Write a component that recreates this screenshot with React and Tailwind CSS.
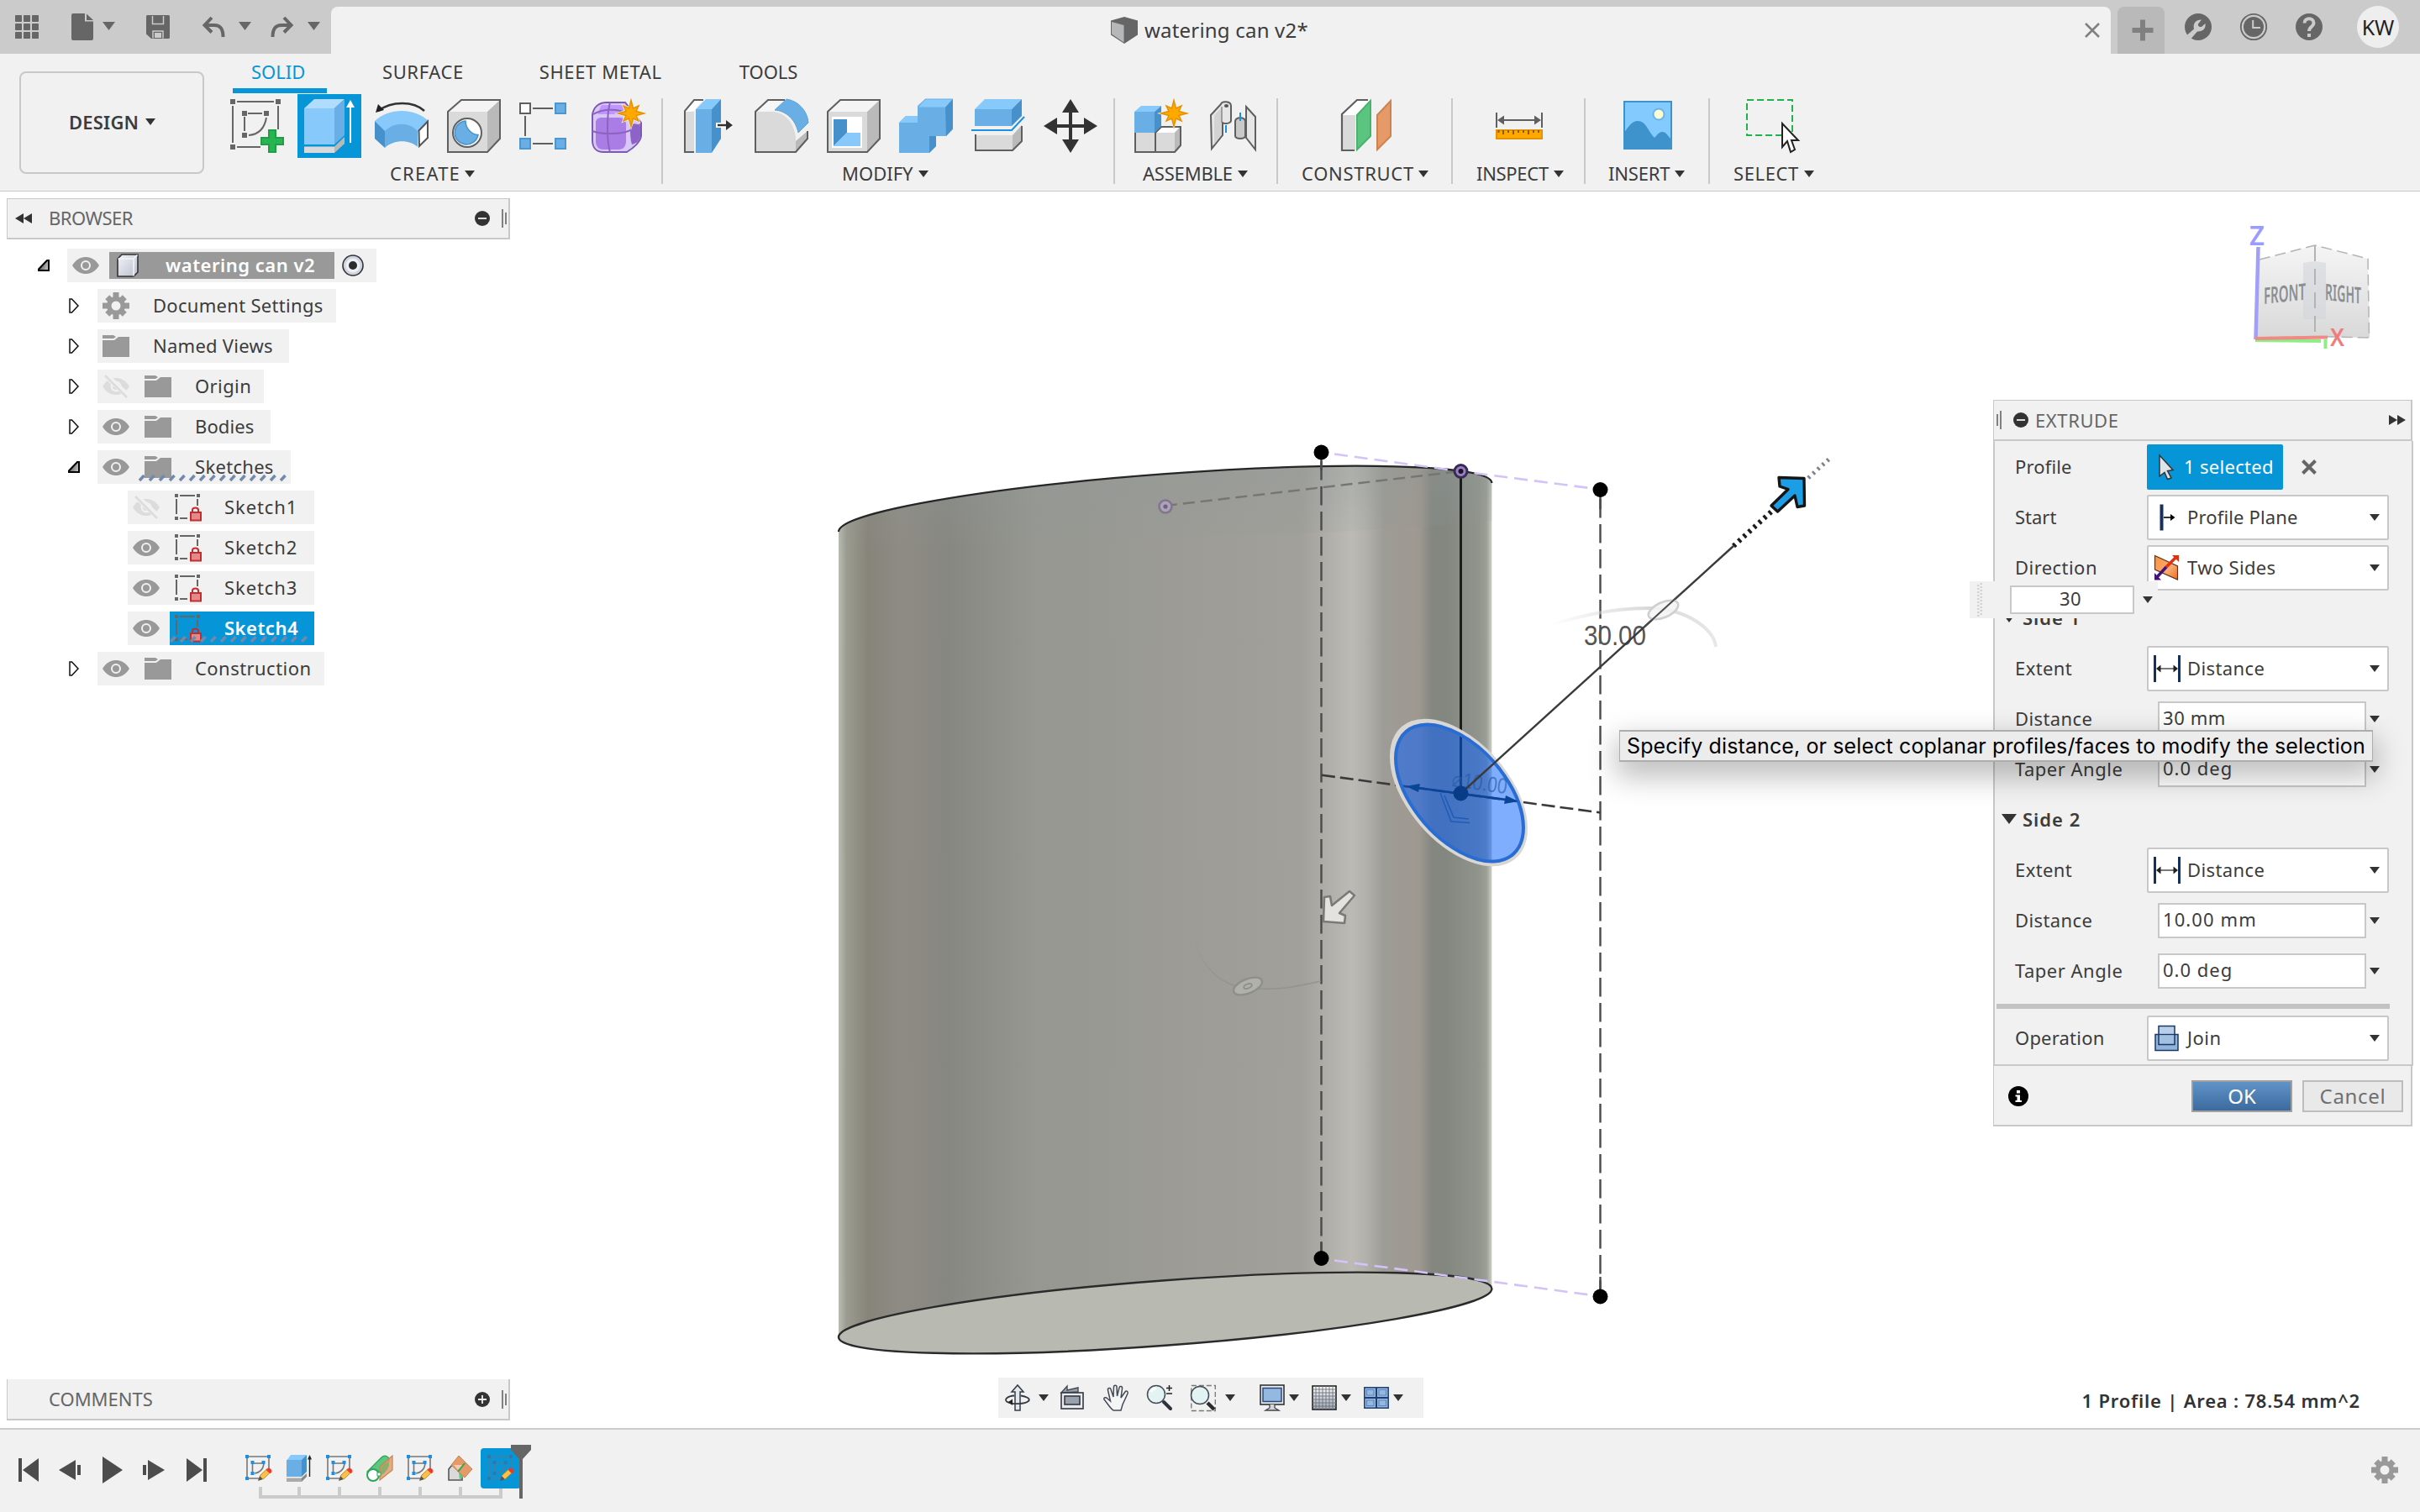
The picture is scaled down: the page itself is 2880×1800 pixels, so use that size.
import React from "react";

/* ---------- small shared glyphs ---------- */

function Caret({ className = "w-3 h-2", fill = "#333" }) {
  return (
    <svg className={"shrink-0 " + className} viewBox="0 0 12 8" preserveAspectRatio="none">
      <path d="M0 0H12L6 8Z" fill={fill} />
    </svg>
  );
}

function Svg({ w = 64, h = 64, className = "size-16", children }) {
  return (
    <svg className={"shrink-0 overflow-visible " + className} viewBox={`0 0 ${w} ${h}`} fill="none">
      {children}
    </svg>
  );
}

function starPoints(cx, cy, outer, inner, n) {
  const pts = [];
  for (let i = 0; i < n * 2; i++) {
    const r = i % 2 ? inner : i % 4 ? outer * 0.82 : outer;
    const a = (Math.PI * i) / n - Math.PI / 2;
    pts.push(`${(cx + r * Math.cos(a)).toFixed(2)},${(cy + r * Math.sin(a)).toFixed(2)}`);
  }
  return pts.join(" ");
}

function Star({ cx, cy }) {
  return (
    <>
      <polygon points={starPoints(cx, cy, 20, 9, 8)} fill="#f1f1f1" />
      <polygon points={starPoints(cx, cy, 15.5, 6.5, 8)} fill="#ffa800" stroke="#e59200" strokeWidth="1.5" />
    </>
  );
}

/* ---------- title bar ---------- */

function TitleBar() {
  return (
    <div className="flex h-16 bg-[#cbcbcb]">
      <div className="flex w-[394px] items-center pl-[18px]">
        <Svg w={28} h={28} className="size-7">
          {[0, 10, 20].map((y) => [0, 10, 20].map((x) => <rect key={x + "-" + y} x={x} y={y} width="8" height="8" rx="0.8" fill="#666" />))}
        </Svg>
        <Svg w={26} h={32} className="ml-[39px] h-8 w-[26px]">
          <path d="M2 0H16V9.500H26V30a2 2 0 0 1-2 2H2a2 2 0 0 1-2-2V2a2 2 0 0 1 2-2Z" fill="#666" />
          <path d="M18 0.500L26 8H18Z" fill="#666" />
        </Svg>
        <Caret className="ml-[11px] mb-0.5 h-2.5 w-[15px]" fill="#666" />
        <Svg w={28} h={28} className="ml-[37px] size-7">
          <path d="M1.500 0H26.500A1.500 1.500 0 0 1 28 1.500V26.500A1.500 1.500 0 0 1 26.500 28H6L0 22.500V1.500A1.500 1.500 0 0 1 1.500 0Z" fill="#666" />
          <path d="M7.500 1V10.500H20.500V1M8 27.500V19H20V27.500" stroke="#cbcbcb" strokeWidth="1.500" />
          <path d="M10 21H18V27H10Z" fill="#cbcbcb" />
        </Svg>
        <Svg w={26} h={24} className="ml-[39px] h-6 w-[26px]">
          <path d="M11 1L2.500 10L11 18.500M3 10H14C21 10 24.500 14 24.500 24" stroke="#666" strokeWidth="4" />
        </Svg>
        <Caret className="ml-[17px] mb-0.5 h-2.5 w-[15px]" fill="#666" />
        <Svg w={26} h={24} className="ml-6 h-6 w-[26px]">
          <path d="M15 1L23.500 10L15 18.500M23 10H12C5 10 1.500 14 1.500 24" stroke="#666" strokeWidth="4" />
        </Svg>
        <Caret className="ml-[17px] mb-0.5 h-2.5 w-[15px]" fill="#666" />
      </div>
      <div className="mt-2 flex w-[2118px] items-center rounded-t-lg bg-[#f1f1f1] pl-[928px]">
        <Svg w={32} h={32} className="size-8">
          <path d="M0 4.500L16 0L32 4.500V21.500L16 32L0 21.500Z" fill="#666" />
          <path d="M1 6L15.500 10V30.500L1 20.500Z" fill="#b5b7b8" />
        </Svg>
        <span className="ml-2 text-[24px] tracking-[0.2px] text-[#3c3c3c]">watering can v2*</span>
        <Svg w={18} h={18} className="ml-[924px] size-[18px]">
          <path d="M1 1L17 17M17 1L1 17" stroke="#808080" strokeWidth="2.500" />
        </Svg>
      </div>
      <div className="mt-2 ml-2 flex w-14 items-center justify-center rounded-t-lg bg-[#b9b9b9]">
        <Svg w={26} h={26} className="ml-1 size-[26px]">
          <path d="M13 0.500V25.500M0.500 13H25.500" stroke="#808080" strokeWidth="6" />
        </Svg>
      </div>
      <div className="flex flex-1 items-center pl-6">
        <Svg w={32} h={32} className="size-8">
          <circle cx="16" cy="16" r="16" fill="#666" />
          <path d="M2.500 26L11 18.500C9.500 12 13 7.500 20 7.500L16 12.500C15.500 15 17 16.500 20 16L24.500 12C25.500 18 21 22 15 21.500L7.500 30Z" fill="#cbcbcb" />
        </Svg>
        <Svg w={32} h={32} className="ml-[34px] size-8">
          <circle cx="16" cy="16" r="15.200" stroke="#666" strokeWidth="1.800" />
          <circle cx="16" cy="16" r="12" fill="#666" />
          <path d="M15.200 8V17H24" stroke="#cbcbcb" strokeWidth="2" />
        </Svg>
        <Svg w={32} h={32} className="ml-[34px] size-8">
          <circle cx="16" cy="16" r="16" fill="#666" />
          <path d="M10.500 11.500C10.500 4.500 21.500 4.500 21.500 11.500C21.500 16 16 15.500 16 21" stroke="#cbcbcb" strokeWidth="4" />
          <rect x="14" y="24" width="4" height="4" fill="#cbcbcb" />
        </Svg>
        <div className="ml-[41px] flex size-[50px] items-center justify-center rounded-full bg-[#eee] text-[25px] text-[#222]">
          <span className="leading-none">KW</span>
        </div>
      </div>
    </div>
  );
}

/* ---------- ribbon icons ---------- */

function IconSketch() {
  return (
    <Svg>
      <path d="M8 3H52M3 8V52M57 8V36M8 57H36M21 17H38M17 21V38" stroke="#666" strokeWidth="2" />
      <path d="M43 22C41 34 34 42 22 43" stroke="#666" strokeWidth="2" />
      {[[0, 0], [54, 0], [0, 54], [14, 14], [40, 14], [14, 40]].map(([x, y]) => (
        <rect key={x + "-" + y} x={x} y={y} width="6" height="6" fill="#666" />
      ))}
      <path d="M46 37H54V46H63V54H54V63H46V54H37V46H46Z" fill="#26b550" stroke="#1f9d49" strokeWidth="2" />
    </Svg>
  );
}

function IconExtrude() {
  return (
    <div className="-m-1.5 size-[76px] shrink-0 bg-[#0696d7]">
      <Svg w={76} h={76} className="size-[76px]">
        <path d="M8 17L20 6H56L44 17Z" fill="#b2dcfe" />
        <path d="M8 17H44V60H8Z" fill="#87c9fb" />
        <path d="M44 17L56 6V49L44 60Z" fill="#69afe5" />
        <path d="M8 62.500H44V70H8Z" fill="#dadada" />
        <path d="M44 62.500L56 51V59L44 70Z" fill="#b9b9b9" />
        <path d="M63 58V14" stroke="#fff" strokeWidth="2" />
        <path d="M58 16L63 7L68 16Z" fill="#fff" />
      </Svg>
    </div>
  );
}

function IconRevolve() {
  return (
    <Svg>
      <path d="M0 26C17 10 47 10 64 26L52 39C42 29 22 29 12 39Z" fill="#87c9fb" />
      <path d="M0 26L12 38V58L0 47Z" fill="#4691cb" />
      <path d="M12 38C23 27 41 27 51 38V57C41 48 23 48 12 58Z" fill="#69afe5" />
      <path d="M52.500 37.500L63 26.500V46L53 56Z" fill="#fff" stroke="#555" strokeWidth="2" />
      <path d="M59 14C46 2 20 2 4 14" stroke="#333" strokeWidth="2.500" />
      <path d="M1 16L4 6L11 13Z" fill="#222" />
    </Svg>
  );
}

function IconHole() {
  return (
    <Svg>
      <path d="M1 15H48V63H1Z" fill="#dadada" />
      <path d="M1 15L17 1H63L48 15Z" fill="#f4f4f4" />
      <path d="M48 15L63 1V47L48 63Z" fill="#bababa" />
      <path d="M1 63V15L17 1H63V47L48 63Z" stroke="#5f5f5f" strokeWidth="2" />
      <circle cx="24" cy="40" r="17" fill="#fff" stroke="#5f5f5f" strokeWidth="2" />
      <path d="M22 26C22 35 29 42 37 42.500A14 14 0 1 1 22 26Z" fill="#69afe5" stroke="#4691cb" strokeWidth="1.500" />
    </Svg>
  );
}

function IconPattern() {
  return (
    <Svg>
      <path d="M16 11H40M7 20V44M16 53H40" stroke="#5f5f5f" strokeWidth="2" />
      <rect x="1" y="5" width="12" height="12" fill="#fff" stroke="#5f5f5f" strokeWidth="2" />
      <rect x="43" y="5" width="12" height="12" fill="#69afe5" stroke="#4c97cf" strokeWidth="2" />
      <rect x="1" y="47" width="12" height="12" fill="#69afe5" stroke="#4c97cf" strokeWidth="2" />
      <rect x="43" y="47" width="12" height="12" fill="#69afe5" stroke="#4c97cf" strokeWidth="2" />
    </Svg>
  );
}

function IconForm() {
  return (
    <Svg>
      <path d="M1 19C2 10 8 4 18 4H40L59 28V44C58 52 50 58 42 63H14C6 63 1 58 1 49Z" fill="#d9c7f7" stroke="#7b5bb0" strokeWidth="2" />
      <path d="M5 28C5 24 8 22 12 22H33C38 22 41 25 41 30V50C41 56 38 60 32 60H14C8 60 5 56 5 50Z" fill="#a97de5" />
      <path d="M12 7H36L42 18H8C8 14 10 10 12 7Z" fill="#bf95ff" />
      <path d="M46 34C48 28 53 28 58 32V44C57 50 53 53 48 54C46 48 46 40 46 34Z" fill="#8e63c9" />
      <path d="M22 4C18 18 18 50 22 63M1 38C10 42 34 42 44 38L58 30M2 18C14 11 32 11 44 18" stroke="#8a64bd" strokeWidth="2" />
      <Star cx={47} cy={17} />
    </Svg>
  );
}

function IconPressPull() {
  return (
    <Svg>
      <path d="M3 15H14V63H3Z" fill="#dadada" />
      <path d="M3 15L14 1H24L14 14Z" fill="#fff" />
      <path d="M14 63H3V14L14 1H25" stroke="#5f5f5f" strokeWidth="2" />
      <path d="M16 12H35V64H16Z" fill="#69afe5" />
      <path d="M16 12L28 0H46L35 12Z" fill="#87c9fb" />
      <path d="M35 12L46 0V47L35 64Z" fill="#4691cb" />
      <path d="M40 31H60" stroke="#fff" strokeWidth="6" />
      <path d="M42 31H56" stroke="#333" strokeWidth="2.500" />
      <path d="M52 25L60 31L52 37Z" fill="#333" />
    </Svg>
  );
}

function IconFillet() {
  return (
    <Svg>
      <path d="M1 15L16 1H36L24 14Z" fill="#f6f6f6" />
      <path d="M1 15H22C36 16 47 28 49 46V63H1Z" fill="#dadada" />
      <path d="M49 50L63 38V46L49 63Z" fill="#bababa" />
      <path d="M36 1H16L1 15V63H49L63 47V38" stroke="#5f5f5f" strokeWidth="2" />
      <path d="M24 13L38 0C52 2 63 14 64 28L52 40C49 25 38 14 24 13Z" fill="#69afe5" stroke="#5aa3d9" strokeWidth="1" />
    </Svg>
  );
}

function IconShell() {
  return (
    <Svg>
      <path d="M1 15H48V63H1Z" fill="#dadada" />
      <path d="M1 15L16 1H63L48 15Z" fill="#f4f4f4" />
      <path d="M48 15L63 1V47L48 63Z" fill="#bababa" />
      <path d="M1 63V15L16 1H63V47L48 63Z" stroke="#5f5f5f" strokeWidth="2" />
      <rect x="6" y="21" width="36" height="37" fill="#fff" />
      <path d="M8 24H24V40L8 56Z" fill="#4691cb" />
      <path d="M24 40H40V56H8Z" fill="#87c9fb" />
    </Svg>
  );
}

function IconCombine() {
  return (
    <Svg>
      <path d="M0 28L8 20H22V8L31 0H64V36L56 44H44V56L36 64H0Z" fill="#69afe5" />
      <path d="M22 10L31 0H64L55 10Z" fill="#87c9fb" stroke="#69afe5" />
      <path d="M0 28L8 20H22V28Z" fill="#87c9fb" />
      <path d="M55 10L64 0V35L56 44ZM36 44H44V56L36 64Z" fill="#4691cb" />
    </Svg>
  );
}

function IconSplit() {
  return (
    <Svg>
      <path d="M4 12H48V32H4Z" fill="#69afe5" />
      <path d="M4 12L16 0H60L48 12Z" fill="#87c9fb" />
      <path d="M48 12L60 0V20L48 32Z" fill="#4691cb" />
      <path d="M5 43H49V61H5Z" fill="#dadada" />
      <path d="M49 43L60 31V50L49 61Z" fill="#bababa" />
      <path d="M5 42V61H49L60 50V32" stroke="#5f5f5f" strokeWidth="2" />
      <path d="M0 37H48L63 21" stroke="#1a8fe3" strokeWidth="2" />
    </Svg>
  );
}

function IconMove() {
  return (
    <Svg>
      <path d="M32 8V56M8 32H56" stroke="#333" strokeWidth="4" />
      <path d="M32 0L42 16H22ZM32 64L42 48H22ZM0 32L16 22V42ZM64 32L48 22V42Z" fill="#333" />
    </Svg>
  );
}

function IconNewComponent() {
  return (
    <Svg>
      <path d="M25 40L32 32H55L48 40Z" fill="#fff" />
      <path d="M0.500 40H24.500V63H0.500ZM25 40H48V63H25Z" fill="#dadada" />
      <path d="M48 40L55 32V56L48 63Z" fill="#bababa" />
      <path d="M1 40V63H48L55 55V33H32L25 40V63" stroke="#5f5f5f" strokeWidth="2" />
      <path d="M0 15H24V40H0Z" fill="#69afe5" />
      <path d="M0 15L8 8H32L24 15Z" fill="#87c9fb" />
      <path d="M24 15L32 8V32L24 40Z" fill="#4691cb" />
      <Star cx={47} cy={17} />
    </Svg>
  );
}

function IconJoint() {
  return (
    <Svg>
      <path d="M5 19L17 6C18 2 29 2 29 8V26C28 29 22 30 19 28V43L6 59Z" fill="#e6e6e6" stroke="#5f5f5f" strokeWidth="2" />
      <path d="M9 19L18 10V42L9 54Z" fill="#d3d3d3" />
      <path d="M18 9V28" stroke="#8a8a8a" strokeWidth="1.500" />
      <ellipse cx="23.500" cy="8" rx="2.600" ry="2" fill="#555" />
      <path d="M23 31V40" stroke="#1a8fe3" strokeWidth="2" />
      <path d="M47 9L58 21V60L47 46Z" fill="#e6e6e6" stroke="#5f5f5f" strokeWidth="2" />
      <path d="M34 26C35 21 45 21 46 26V44C45 48 35 48 34 44Z" fill="#c9c9c9" stroke="#5f5f5f" strokeWidth="2" />
      <path d="M40 16V26" stroke="#1a8fe3" strokeWidth="2" />
    </Svg>
  );
}

function IconPlanes() {
  return (
    <Svg>
      <path d="M3 19L20 2H36L20 19Z" fill="#fff" />
      <path d="M3 19H19V61H3Z" fill="#dadada" />
      <path d="M18 61H3V18L21 1H34" stroke="#5f5f5f" strokeWidth="2.200" />
      <path d="M21 19L37 2V44L21 60Z" fill="#5bc57f" stroke="#49b26e" strokeWidth="2" />
      <path d="M45 19L61 2V44L45 60Z" fill="#e59a68" stroke="#cc834f" strokeWidth="2" />
    </Svg>
  );
}

function IconMeasure() {
  return (
    <Svg>
      <path d="M5 16V34M59 16V34M8 25H56" stroke="#5f5f5f" strokeWidth="2" />
      <path d="M6 25L14 19.500V30.500ZM58 25L50 19.500V30.500Z" fill="#5f5f5f" />
      <rect x="5" y="37" width="54" height="10" fill="#ffa800" stroke="#e59200" strokeWidth="2" />
      <path d="M7.500 37V40M13 37V42M19 37V40M25 37V42M31 37V40M37 37V40M43 37V42M49 37V40M55 37V40" stroke="#8a5b00" strokeWidth="2" />
    </Svg>
  );
}

function IconInsert() {
  return (
    <Svg>
      <rect x="4" y="3" width="56" height="56" fill="#82caff" stroke="#3e93cd" strokeWidth="2" />
      <circle cx="45" cy="18" r="6.500" fill="#feffd3" stroke="#6cb3e4" strokeWidth="2" />
      <path d="M4 40C8 34 13 26 20 26C30 26 32 38 40 46C43 43 45 39 49 39C54 39 56 44 60 48V59H4Z" fill="#3e93cd" />
    </Svg>
  );
}

function IconSelect() {
  return (
    <Svg>
      <rect x="1" y="1" width="54" height="42" stroke="#20b24b" strokeWidth="2" strokeDasharray="8 4" />
      <path d="M43 29V57L49 50L53 63L58 60L54 49H62Z" fill="#fff" stroke="#222" strokeWidth="2" />
    </Svg>
  );
}

/* ---------- ribbon ---------- */

const GROUPS = [
  { label: "CREATE", track: "tracking-[1.2px]", box: "w-[513px]", pad: "", text: "pl-[190px]", gap: "ml-[5px]", icons: [IconSketch, IconExtrude, IconRevolve, IconHole, IconPattern, IconForm] },
  { label: "MODIFY", track: "tracking-normal", box: "w-[536px]", pad: "pl-[23px]", text: "pl-[213px]", gap: "ml-1.5", icons: [IconPressPull, IconFillet, IconShell, IconCombine, IconSplit, IconMove] },
  { label: "ASSEMBLE", track: "tracking-[-0.2px]", box: "w-[192px]", pad: "pl-[23px]", text: "pl-[33px]", gap: "ml-1.5", icons: [IconNewComponent, IconJoint] },
  { label: "CONSTRUCT", track: "tracking-[0.7px]", box: "w-[206px]", pad: "pl-[73px]", text: "pl-[28px]", gap: "ml-[5px]", icons: [IconPlanes] },
  { label: "INSPECT", track: "tracking-[-0.3px]", box: "w-[156px]", pad: "pl-[47px]", text: "pl-[28px]", gap: "ml-1.5", icons: [IconMeasure] },
  { label: "INSERT", track: "tracking-[-0.2px]", box: "w-[146px]", pad: "pl-[42px]", text: "pl-[27px]", gap: "ml-1.5", icons: [IconInsert] },
  { label: "SELECT", track: "tracking-[0.6px]", box: "w-[146px]", pad: "pl-[43px]", text: "pl-[28px]", gap: "ml-1.5", icons: [IconSelect] },
];

function Ribbon() {
  return (
    <div className="flex h-[164px] border-b border-[#c8c8c8] bg-[#f1f1f1] text-[22px] text-[#3c3c3c]">
      <div className="w-[274px] pt-[21px] pl-[23px]">
        <div className="flex h-[122px] w-[220px] items-center rounded-lg border-2 border-[#c8c8c8] pb-0.5 pl-[57px]">
          <span className="font-semibold tracking-[0.2px]">DESIGN</span>
          <Caret className="ml-2 h-2 w-3" />
        </div>
      </div>
      <div className="flex flex-1 flex-col">
        <div className="flex h-[47px] leading-[40px]">
          <div className="ml-[3px] w-[112px] border-b-[6px] border-[#0696d7] pt-px pl-[22px] text-[#0696d7]">SOLID</div>
          <div className="ml-[66px] pt-px tracking-[0.6px]">SURFACE</div>
          <div className="ml-[90px] pt-px tracking-[0.6px]">SHEET METAL</div>
          <div className="ml-[92px] pt-px">TOOLS</div>
        </div>
        <div className="flex">
          {GROUPS.map((g, i) => (
            <React.Fragment key={g.label}>
              {i > 0 && <div className="mt-1.5 h-[102px] w-0.5 bg-[#c8c8c8]" />}
              <div className={"pt-[7px] " + g.box}>
                <div className={"flex h-16 gap-[22px] " + g.pad}>
                  {g.icons.map((I, k) => <I key={k} />)}
                </div>
                <div className={"mt-2.5 flex items-center leading-[29px] " + g.text}>
                  <span className={g.track}>{g.label}</span>
                  <Caret className={"h-2 w-3 " + g.gap} />
                </div>
              </div>
            </React.Fragment>
          ))}
        </div>
      </div>
    </div>
  );
}

/* ---------- browser tree ---------- */

function Eye({ off }) {
  return off ? (
    <Svg w={32} h={26} className="h-[26px] w-8">
      <path d="M0 13C5 5 11 3 16 3S27 5 32 13C27 21 21 23 16 23S5 21 0 13Z" fill="#dcdcdc" />
      <circle cx="16" cy="13" r="6.500" fill="#f1f1f1" />
      <circle cx="16" cy="13" r="4" fill="#dcdcdc" />
      <path d="M3 -1L31 25" stroke="#f1f1f1" strokeWidth="7" />
      <path d="M3 0L29 26" stroke="#dcdcdc" strokeWidth="2.500" />
    </Svg>
  ) : (
    <Svg w={32} h={20} className="h-5 w-8">
      <path d="M0 10C5 2 11 0 16 0S27 2 32 10C27 18 21 20 16 20S5 18 0 10Z" fill="#999" />
      <circle cx="16" cy="10" r="5" stroke="#f1f1f1" strokeWidth="2" />
    </Svg>
  );
}

function Folder() {
  return (
    <Svg w={32} h={26} className="h-[26px] w-8">
      <path d="M0 0H13L16 2L13 4H0Z" fill="#999" />
      <path d="M0 6H14L19 2H32V26H0Z" fill="#999" />
    </Svg>
  );
}

function Gear() {
  return (
    <Svg w={32} h={32} className="size-8">
      <g fill="#999">
        {[0, 45, 90, 135].map((a) => (
          <rect key={a} x="12.500" y={a % 90 ? 1.5 : 0} width="7" height={a % 90 ? 29 : 32} transform={`rotate(${a} 16 16)`} />
        ))}
        <circle cx="16" cy="16" r="11" />
      </g>
      <circle cx="16" cy="16" r="5.500" fill="#f1f1f1" />
    </Svg>
  );
}

function LockedSketch() {
  return (
    <Svg w={32} h={32} className="size-8">
      <path d="M6 2H24M2 6V24M27 6V14M6 29H15" stroke="#666" strokeWidth="2" />
      <path d="M0 0H4V4H0ZM26 0H30V4H26ZM0 27H4V31H0Z" fill="#666" />
      <path d="M21 21V19C21 15.500 28 15.500 28 19V21" stroke="#c92a2a" strokeWidth="2" />
      <rect x="19" y="22" width="12" height="9.500" fill="#e08a8c" stroke="#c92a2a" strokeWidth="2" />
    </Svg>
  );
}

function Twisty({ open }) {
  return open ? (
    <Svg w={14} h={14} className="size-3.5">
      <defs>
        <linearGradient id="tw" x1="0" y1="0" x2="1" y2="0.300">
          <stop offset="0" stopColor="#444" />
          <stop offset="1" stopColor="#bbb" />
        </linearGradient>
      </defs>
      <path d="M13 1V13H1V11.500L11 1Z" fill="url(#tw)" stroke="#000" strokeWidth="2" />
    </Svg>
  ) : (
    <Svg w={12} h={18} className="ml-px h-[18px] w-3">
      <path d="M1 1H3.500L11 9L3.500 17H1Z" fill="#fff" stroke="#111" strokeWidth="1.500" />
    </Svg>
  );
}

function Hatch({ n }) {
  return (
    <svg className="absolute bottom-[3px] h-2 overflow-visible" width={n * 12} height="8" fill="none">
      {Array.from({ length: n }, (_, i) => (
        <path key={i} d={`M${i * 12 + 1} 7L${i * 12 + 6.5} 1`} stroke="#7289ae" strokeWidth="3.500" />
      ))}
    </svg>
  );
}

function PanelHeader({ children, className }) {
  return (
    <div className={"flex h-[49px] items-center border-t border-r-2 border-b-2 border-l border-[#c8c8c8] bg-[#f1f1f1] text-[22px] text-[#666] " + className}>
      {children}
    </div>
  );
}

function RoundSign({ plus }) {
  return (
    <Svg w={18} h={18} className="size-[18px]">
      <circle cx="9" cy="9" r="9" fill="#333" />
      <path d={plus ? "M4 9H14M9 4V14" : "M4 9H14"} stroke="#f1f1f1" strokeWidth="1.800" />
    </Svg>
  );
}

function GripRight() {
  return (
    <>
      <div className="ml-[14px] h-[22px] w-[2px] bg-[#808080]" />
      <div className="mr-[2px] ml-[2px] h-[14px] w-[2px] bg-[#808080]" />
    </>
  );
}

const LEVEL1 = [
  { name: "Document Settings", w: "w-[284px]", t: "tracking-[0.300px]", gear: true },
  { name: "Named Views", w: "w-[228px]", t: "tracking-[0.250px]" },
  { name: "Origin", w: "w-[198px]", t: "tracking-[0.400px]", eye: "off" },
  { name: "Bodies", w: "w-[206px]", t: "tracking-[0.100px]", eye: "on" },
  { name: "Sketches", w: "w-[230px]", t: "tracking-[0.300px]", eye: "on", open: true },
];

function Level1({ item }) {
  return (
    <div className="flex h-10 items-center">
      <div className="flex w-[116px] justify-start pl-[81px]">
        <Twisty open={item.open} />
      </div>
      <div className={"relative flex h-10 items-center bg-[#f1f1f1] pl-1.5 " + item.w}>
        {item.eye && <div className="mr-[18px] flex"><Eye off={item.eye === "off"} /></div>}
        {item.gear ? <Gear /> : <Folder />}
        <span className={"ml-[28px] pb-px whitespace-nowrap " + item.t}>{item.name}</span>
        {item.open && <div className="absolute bottom-0 left-[49px]"><Hatch n={15} /></div>}
      </div>
    </div>
  );
}

function Browser() {
  return (
    <div className="absolute top-2 left-2 w-[599px] text-[22px] text-[#3c3c3c]">
      <PanelHeader className="pl-[9px]">
        <Svg w={20} h={12} className="h-3 w-5">
          <path d="M10 0V12L0 6ZM20 0V12L10 6Z" fill="#333" />
        </Svg>
        <span className="ml-5 pb-px tracking-[-0.500px]">BROWSER</span>
        <div className="ml-auto flex"><RoundSign /></div>
        <GripRight />
      </PanelHeader>
      <div className="-ml-2 mt-[11px] flex flex-col gap-2">
        <div className="flex h-10 items-center">
          <div className="w-20 pl-[45px]"><Twisty open /></div>
          <div className="flex h-10 w-[368px] items-center bg-[#f1f1f1] pl-1.5">
            <Eye />
            <div className="ml-3 flex h-8 w-[268px] items-center bg-[#999] pl-[9px]">
              <Svg w={26} h={28} className="h-7 w-[26px]">
                <defs>
                  <linearGradient id="cb" x1="0" y1="0" x2="1" y2="1">
                    <stop offset="0" stopColor="#f2f4f8" />
                    <stop offset="1" stopColor="#b9c0cc" />
                  </linearGradient>
                </defs>
                <path d="M1 6L6 1H25V22L20 27H1Z" fill="url(#cb)" stroke="#333" strokeWidth="1.600" />
                <path d="M1.500 6H20V26.500M20 6L24.500 1.500" stroke="#f4f6fa" strokeWidth="1.500" />
              </Svg>
              <span className="ml-8 pb-px font-semibold tracking-[0.500px] text-white">watering can v2</span>
            </div>
            <Svg w={26} h={26} className="ml-[9px] size-[26px]">
              <circle cx="13" cy="13" r="12" fill="#cfd5e0" stroke="#333" strokeWidth="1.600" />
              <circle cx="13" cy="13" r="8.500" fill="#edf0f5" />
              <circle cx="13" cy="13" r="5" fill="#2c2c2c" />
            </Svg>
          </div>
        </div>
        {LEVEL1.map((i) => <Level1 key={i.name} item={i} />)}
        {[1, 2, 3, 4].map((n) => (
          <div key={n} className="ml-[152px] flex h-10 w-[222px] items-center bg-[#f1f1f1] pl-1.5">
            <Eye off={n === 1} />
            <div className={"relative ml-3 flex h-10 flex-1 items-center pl-1.5 " + (n === 4 ? "bg-[#0696d7] font-semibold text-white" : "")}>
              <LockedSketch />
              <span className={"ml-[27px] pb-px " + (n === 4 ? "tracking-[0.500px]" : "tracking-[0.900px]")}>{"Sketch" + n}</span>
              {n === 4 && <div className="absolute bottom-0 left-0"><Hatch n={14} /></div>}
            </div>
          </div>
        ))}
        <Level1 item={{ name: "Construction", w: "w-[270px]", t: "tracking-[0.450px]", eye: "on" }} />
      </div>
    </div>
  );
}

/* ---------- extrude dialog ---------- */

function Field({ label, track, children }) {
  return (
    <div className="flex h-[60px] items-center pb-px">
      <span className={"w-[182px] pl-[24px] whitespace-nowrap " + track}>{label}</span>
      {children}
    </div>
  );
}

function Select({ icon, text, track }) {
  return (
    <div className="-ml-px flex h-[54px] w-[288px] items-center rounded-[2px] border-2 border-[#c8c8c8] bg-white pl-1.5">
      {icon}
      <span className={"ml-[8px] whitespace-nowrap " + track}>{text}</span>
      <Caret className="mr-[9px] ml-auto h-2 w-3" />
    </div>
  );
}

function NumberBox({ text, track }) {
  return (
    <>
      <div className="ml-3 flex h-[42px] w-[248px] items-center border-2 border-[#c8c8c8] bg-white pb-0.5 pl-1">
        <span className={track}>{text}</span>
      </div>
      <Caret className="ml-1 h-2 w-3" />
    </>
  );
}

const ExtentIcon = (
  <Svg w={32} h={32} className="size-8">
    <path d="M1.500 0V32M30.500 0V32" stroke="#14305c" strokeWidth="3" />
    <path d="M6 16H26" stroke="#222" strokeWidth="1.200" />
    <path d="M3 16L8.500 11.500V20.500ZM29 16L23.500 11.500V20.500Z" fill="#222" />
  </Svg>
);

const StartIcon = (
  <Svg w={32} h={32} className="size-8">
    <path d="M9.500 0.500V31.500" stroke="#14305c" strokeWidth="4" />
    <path d="M12 16H22" stroke="#000" strokeWidth="1.600" />
    <path d="M20 12L25.500 16L20 20Z" fill="#000" />
  </Svg>
);

const TwoSidesIcon = (
  <Svg w={32} h={32} className="size-8">
    <defs>
      <linearGradient id="or" x1="0" y1="0" x2="1" y2="1">
        <stop offset="0" stopColor="#ff8f3a" />
        <stop offset="0.600" stopColor="#f7ac74" />
        <stop offset="1" stopColor="#f2691a" />
      </linearGradient>
    </defs>
    <path d="M1.500 1.500L28.500 14V30L1.500 18Z" fill="url(#or)" stroke="#5b3416" strokeWidth="1.200" />
    <path d="M15 15L26 4" stroke="#e2300e" strokeWidth="3.500" />
    <path d="M22 1H30V9Z" fill="#e2300e" />
    <path d="M15 15L4 27" stroke="#44117a" strokeWidth="3.500" />
    <path d="M1 22V30.500H9Z" fill="#44117a" />
  </Svg>
);

const JoinIcon = (
  <Svg w={32} h={32} className="size-8">
    <rect x="2" y="11.500" width="27" height="19" fill="#91b4dd" stroke="#1d3765" strokeWidth="1.500" />
    <rect x="6" y="1.500" width="19" height="22" fill="#a6c3e4" fillOpacity="0.800" stroke="#1d3765" strokeWidth="1.500" />
    <path d="M6 11.500H25" stroke="#1d3765" strokeWidth="1.200" />
  </Svg>
);

function SideTitle({ text }) {
  return (
    <div className="flex h-[60px] items-center pb-0.5 pl-2 font-semibold tracking-[1px]">
      <Caret className="h-3 w-[18px]" />
      <span className="ml-[7px]">{text}</span>
    </div>
  );
}

function SideFields({ distance, track }) {
  return (
    <>
      <Field label="Extent" track="tracking-[0.400px]">
        <Select icon={ExtentIcon} text="Distance" track="tracking-[0.400px]" />
      </Field>
      <Field label="Distance" track="tracking-[0.400px]">
        <NumberBox text={distance} track={track} />
      </Field>
      <Field label="Taper Angle" track="tracking-[0.500px]">
        <NumberBox text="0.0 deg" track="tracking-[1px]" />
      </Field>
    </>
  );
}

function ExtrudeDialog() {
  return (
    <div className="absolute top-[248px] left-[2372px] w-[500px] text-[22px] text-[#3c3c3c]">
      <PanelHeader className="w-[499px]">
        <div className="ml-[3px] h-[14px] w-[2px] bg-[#808080]" />
        <div className="ml-[2px] h-[22px] w-[2px] bg-[#808080]" />
        <div className="ml-[14px] flex"><RoundSign /></div>
        <span className="ml-2 tracking-[0.600px]">EXTRUDE</span>
        <Svg w={20} h={12} className="mr-1.5 ml-auto h-3 w-5">
          <path d="M10 0V12L20 6ZM0 0V12L10 6Z" fill="#333" />
        </Svg>
      </PanelHeader>
      <div className="h-[744px] border-x-2 border-b-2 border-[#c8c8c8] bg-[#f1f1f1] pt-px">
        <Field label="Profile" track="tracking-[0.150px]">
          <div className="-ml-px flex h-[54px] w-[162px] items-center rounded-[2px] bg-[#0696d7] pl-3.5 text-white">
            <Svg w={18} h={30} className="h-[30px] w-[18px]">
              <path d="M1 1L17 18.500L10.500 19.500L15 28L10.500 29.500L7 21.500L1 26Z" fill="#dfe3ea" stroke="#333" strokeWidth="1.500" />
            </Svg>
            <span className="ml-[12px] tracking-[0.300px]">1 selected</span>
          </div>
          <Svg w={18} h={18} className="ml-[22px] size-[18px]">
            <path d="M1.500 1.500L16.500 16.500M16.500 1.500L1.500 16.500" stroke="#666" strokeWidth="4" />
          </Svg>
        </Field>
        <Field label="Start" track="tracking-normal">
          <Select icon={StartIcon} text="Profile Plane" track="tracking-[0.150px]" />
        </Field>
        <Field label="Direction" track="tracking-[0.450px]">
          <Select icon={TwoSidesIcon} text="Two Sides" track="tracking-[0.350px]" />
        </Field>
        <SideTitle text="Side 1" />
        <SideFields distance="30 mm" track="tracking-[0.600px]" />
        <SideTitle text="Side 2" />
        <SideFields distance="10.00 mm" track="tracking-[1.100px]" />
        <div className="mt-[9px] mb-[5px] ml-0.5 h-1.5 w-[468px] bg-[#c2c2c2]" />
        <Field label="Operation" track="tracking-[0.200px]">
          <Select icon={JoinIcon} text="Join" track="tracking-[0.500px]" />
        </Field>
      </div>
      <div className="flex h-[72px] w-[499px] items-center border-r-2 border-b-2 border-l border-[#c8c8c8] bg-[#f1f1f1] pt-0.5 pl-[17px]">
        <Svg w={24} h={24} className="size-6">
          <circle cx="12" cy="12" r="12" fill="#000" />
          <path d="M10 5H14V8.500H10ZM8.500 10.500H14V17H16V19H8.500V17H10.500V12.500H8.500Z" fill="#fff" />
        </Svg>
        <div className="ml-[194px] flex h-[38px] w-[120px] items-center justify-center border-2 border-[#a0a0a0] bg-gradient-to-b from-[#6094c9] to-[#3c6a9d] text-[24px] text-white">
          <span>OK</span>
        </div>
        <div className="ml-[12px] flex h-[38px] w-[120px] items-center justify-center border-2 border-[#bdbdbd] bg-[#e9e9e9] text-[24px] tracking-[0.700px] text-[#707070]">
          <span>Cancel</span>
        </div>
      </div>
    </div>
  );
}

function FloatingInput() {
  return (
    <div className="absolute top-[464px] left-[2344px] flex h-11 w-56 items-center bg-[#f1f1f1] pb-px text-[22px] text-[#3c3c3c]">
      <Svg w={8} h={40} className="ml-2 h-10 w-2">
        {Array.from({ length: 10 }, (_, i) => (
          <path key={i} d={`M1 ${i * 4 + 3}h2.500M4.500 ${i * 4 + 1}h2.500`} stroke="#c8c8c8" strokeWidth="1.400" />
        ))}
      </Svg>
      <div className="ml-8 flex h-[34px] w-[148px] items-center justify-center border-2 border-[#c8c8c8] bg-white pb-0.5 pr-1 tracking-[0.400px]">
        <span>30</span>
      </div>
      <Caret className="ml-2.5 h-2 w-3" />
    </div>
  );
}

function Tooltip() {
  return (
    <div className="absolute top-[641px] left-[1927px] flex h-[38px] w-[897px] items-center border border-t-2 border-b-2 border-[#adadad] bg-[#ececec] pt-0.5 pl-2 text-black shadow-[0_14px_34px_4px_rgba(0,0,0,0.26)]">
      <span className="font-[Inter] text-[25px] tracking-[0.120px] whitespace-nowrap">
        Specify distance, or select coplanar profiles/faces to modify the selection
      </span>
    </div>
  );
}

/* ---------- 3D viewport ---------- */

const DASH = { stroke: "#4a4a4a", strokeWidth: 2.4, strokeDasharray: "22.5 7.5" };

function Scene() {
  return (
    <svg className="absolute inset-0 h-[1472px] w-[2880px]" viewBox="0 228 2880 1472" fill="none">
      <defs>
        <linearGradient id="body" gradientUnits="userSpaceOnUse" x1="998" y1="0" x2="1775.400" y2="0">
          <stop offset="0" stopColor="#b9bdb2" />
          <stop offset="0.012" stopColor="#9b9c90" />
          <stop offset="0.045" stopColor="#87847a" />
          <stop offset="0.095" stopColor="#8e8b84" />
          <stop offset="0.165" stopColor="#878781" />
          <stop offset="0.190" stopColor="#8a8a84" />
          <stop offset="0.300" stopColor="#969791" />
          <stop offset="0.550" stopColor="#9d9c97" />
          <stop offset="0.710" stopColor="#a1a09a" />
          <stop offset="0.745" stopColor="#aeada8" />
          <stop offset="0.785" stopColor="#bbbab5" />
          <stop offset="0.805" stopColor="#b3b2ad" />
          <stop offset="0.835" stopColor="#9d9c96" />
          <stop offset="0.880" stopColor="#9f9991" />
          <stop offset="0.890" stopColor="#9c978f" />
          <stop offset="0.908" stopColor="#848780" />
          <stop offset="0.930" stopColor="#828780" />
          <stop offset="0.980" stopColor="#90948c" />
          <stop offset="0.992" stopColor="#9b9f96" />
          <stop offset="1" stopColor="#ccd0c7" />
        </linearGradient>
        <linearGradient id="topTint" x1="0" y1="0" x2="0" y2="1">
          <stop offset="0" stopColor="#8f9896" stopOpacity="0.350" />
          <stop offset="1" stopColor="#8f9896" stopOpacity="0" />
        </linearGradient>
        <linearGradient id="cube" x1="0" y1="0" x2="0" y2="1">
          <stop offset="0" stopColor="#f5f5f5" />
          <stop offset="1" stopColor="#d9d9d9" />
        </linearGradient>
        <linearGradient id="arcA" gradientUnits="userSpaceOnUse" x1="1846" y1="740" x2="2044" y2="740">
          <stop offset="0" stopColor="#d8d8d8" stopOpacity="0" />
          <stop offset="0.600" stopColor="#d8d8d8" />
          <stop offset="1" stopColor="#e8e8e8" />
        </linearGradient>
        <linearGradient id="arcB" gradientUnits="userSpaceOnUse" x1="1422" y1="1110" x2="1470" y2="1170">
          <stop offset="0" stopColor="#8f8e89" stopOpacity="0" />
          <stop offset="1" stopColor="#8f8e89" />
        </linearGradient>
      </defs>

      {/* cylinder body and its lower face */}
      <path d="M998 631.800C998 610.400 1172 580.100 1386.700 564.200C1601.400 548.300 1775.400 552.800 1775.400 574.200V1534.200L1386.700 1600L998 1591.800Z" fill="url(#body)" />
      <path d="M998 631.800C998 610.400 1172 580.100 1386.700 564.200C1601.400 548.300 1775.400 552.800 1775.400 574.200V620C1600 640 1200 640 998 660Z" fill="url(#topTint)" />
      <path d="M998 633C998 610.400 1172 580.100 1386.700 564.200C1601.400 548.300 1775.400 552.800 1775.400 575" stroke="#262626" strokeWidth="2.200" />
      <circle r="1" transform="matrix(388.700 -28.800 0 38.800 1386.700 1563)" vectorEffect="non-scaling-stroke" fill="#b8bab2" stroke="#2a2a2a" strokeWidth="2.400" />

      {/* construction lines */}
      <path d="M1588 540.500L1738 561L1892 581M1588 1500.500L1892 1541.500" stroke="#d3c3f7" strokeWidth="2.600" strokeDasharray="16 8" />
      <path d="M1387 602L1738 561" stroke="#77756f" strokeWidth="2.400" strokeDasharray="14 7" />
      <path d="M1572.500 538V1498" {...DASH} strokeDashoffset="-11" />
      <path d="M1904.500 583V1543" {...DASH} strokeDashoffset="-11" />
      <path d="M1572.500 538V560M1904.500 583V606M1572.500 1478V1498M1904.500 1520V1543" stroke="#4a4a4a" strokeWidth="2.400" />
      <path d="M1573 922.700L1904.500 967.400" stroke="#3a3a3a" strokeWidth="2.600" strokeDasharray="16 6" />
      <path d="M1738.500 561V944" stroke="#1c1c1c" strokeWidth="3" />

      {/* taper handle arcs */}
      <path d="M1822 752C1866 736 1918 723 1966 724C2010 726 2040 750 2042 770" stroke="url(#arcA)" strokeWidth="4" />
      <path d="M1422 1112C1424 1140 1446 1174 1485 1176C1520 1180 1545 1174 1572 1168" stroke="url(#arcB)" strokeWidth="1.600" opacity="0.700" />

      <text x="1885" y="768" textLength="74" lengthAdjust="spacingAndGlyphs" fontFamily="Liberation Sans" fontSize="33" fill="#555">30.00</text>

      {/* selected profile */}
      <circle r="1" transform="matrix(78.500 43 0 72.500 1736 943.500)" vectorEffect="non-scaling-stroke" stroke="#d9d7d3" strokeWidth="7" />
      <circle r="1" transform="matrix(76 41.500 0 70 1737 944)" vectorEffect="non-scaling-stroke" fill="#005cff" fillOpacity="0.500" stroke="#2a6dd2" strokeWidth="4" />
      <path d="M1680 937L1800 953" stroke="#0b4596" strokeWidth="2.600" />
      <path d="M1673 936L1690 933L1688 943ZM1807 954L1790 957L1792 947Z" fill="#0b4596" />
      <text x="1727" y="936" transform="rotate(8 1727 936)" textLength="66" lengthAdjust="spacingAndGlyphs" fontFamily="Liberation Sans" fontSize="26" fill="#2459a3" fillOpacity="0.650">⌀10.00</text>
      <path d="M1714 944L1727 978L1749 979.500M1719 947L1730 973L1748 975" stroke="#1f5cb8" strokeWidth="1.500" />

      {/* extrusion direction */}
      <path d="M1738.500 944.500L2063 650" stroke="#3a3a3a" strokeWidth="2.400" />
      <path d="M2063 650L2112 605.500" stroke="#1c1c1c" strokeWidth="6" strokeDasharray="3.200 5" />
      <path d="M2152 569L2180 543.500" stroke="#1c1c1c" strokeOpacity="0.550" strokeWidth="5" strokeDasharray="2.600 5" />
      <path d="M2117 568.500L2147 569.500L2147.500 602L2139 603.500L2136 590L2115.500 609L2108 602L2128 582.500L2118 579Z" fill="#1b9ee6" stroke="#151515" strokeWidth="3.400" strokeLinejoin="round" />
      <path d="M1575 1097L1576 1068L1583 1067L1585 1078L1606 1061L1612 1066L1594 1087L1601 1090L1600 1099Z" fill="#e3e2df" stroke="#7b7a76" strokeWidth="2.600" strokeLinejoin="round" />
      <ellipse cx="1979.500" cy="726" rx="19" ry="9" transform="rotate(-24 1979.500 726)" fill="#f4f4f4" fillOpacity="0.850" stroke="#cfcfcf" strokeWidth="2.600" />
      <ellipse cx="1485" cy="1174" rx="18" ry="8.500" transform="rotate(-22 1485 1174)" fill="#b0b1ab" stroke="#8f8f8a" strokeWidth="2.400" />
      <ellipse cx="1485" cy="1174" rx="5" ry="2.500" transform="rotate(-22 1485 1174)" stroke="#8f8f8a" strokeWidth="1.800" />
      <path d="M1956 747L2000 707" stroke="#4a4a4a" strokeWidth="1.800" />

      {/* points */}
      {[[1572.5, 538.5], [1904.5, 583], [1572.5, 1498], [1904.5, 1543.5]].map(([x, y]) => (
        <circle key={x + "-" + y} cx={x} cy={y} r="9" fill="#000" />
      ))}
      <circle cx="1738.500" cy="944.500" r="9" fill="#083c86" />
      <circle cx="1738.500" cy="561" r="7.500" fill="#9a7fc4" stroke="#382a52" strokeWidth="3" />
      <circle cx="1738.500" cy="561" r="3" fill="#1a1426" />
      <circle cx="1387" cy="603" r="7.500" fill="#ada3b8" stroke="#82768f" strokeWidth="2.600" />
      <circle cx="1387" cy="603" r="2.600" fill="#6d6080" />

      {/* view cube */}
      <path d="M2687 310L2755 292V401L2686 401Z" fill="url(#cube)" />
      <path d="M2755 292L2818 308L2820 402L2755 401Z" fill="url(#cube)" />
      <path d="M2741 313L2755 311L2768 313V380H2741Z" fill="#d3d6da" fillOpacity="0.600" />
      <path d="M2689 309L2755 292L2818 308L2819.500 402L2755 400.500L2687 402" stroke="#b4b4b4" strokeWidth="1.500" strokeDasharray="13 6" />
      <path d="M2755 292V401" stroke="#b3b3b3" strokeWidth="2" strokeDasharray="19 9" />
      <path d="M2687.500 294L2684.500 404" stroke="#a0a0fb" strokeWidth="4.500" />
      <path d="M2684 405L2762 406M2767.500 404V415" stroke="#8dee85" strokeWidth="4" />
      <path d="M2684 403L2770 401.500" stroke="#f08a85" strokeWidth="4" />
      <g fontFamily="Noto Sans" fontWeight="600">
        <text x="2677" y="292" fontSize="33" fill="#9b9bff" textLength="18" lengthAdjust="spacingAndGlyphs">Z</text>
        <text x="2773" y="412" fontSize="29" fill="#f27b7b" textLength="17" lengthAdjust="spacingAndGlyphs">X</text>
        <text x="0" y="0" transform="matrix(1 -0.110 0 1 2694 362)" fontSize="27" fill="#8b8f94" textLength="50" lengthAdjust="spacingAndGlyphs">FRONT</text>
        <text x="0" y="0" transform="matrix(1 0.110 0 1 2767 357)" fontSize="27" fill="#8b8f94" textLength="43" lengthAdjust="spacingAndGlyphs">RIGHT</text>
      </g>
    </svg>
  );
}

/* ---------- navigation bar ---------- */

function NavBar() {
  const c = "h-2 w-3 shrink-0";
  return (
    <div className="absolute top-[1412px] left-[1188px] flex h-12 w-[506px] items-center bg-[#f1f1f1] pl-2">
      <Svg w={30} h={32} className="h-8 w-[30px]">
        <path d="M12 31V9H8L15 1L22 9H18V31Z" fill="#e4e8ee" stroke="#333c46" strokeWidth="1.500" />
        <path d="M11 13.500C3 14 -1 18 2 20.500C8 24.500 24 24 28.500 19.500C30 16.500 25 14.500 19 13.500" stroke="#333c46" strokeWidth="1.800" />
        <path d="M4 21L9 17.500V25Z" fill="#222" />
      </Svg>
      <Caret className={c + " ml-2.5"} />
      <Svg w={28} h={30} className="ml-[14px] h-[30px] w-7">
        <path d="M1 9L8 1V6L21 3V8Z" fill="#98a0ac" stroke="#444a54" strokeWidth="1.400" />
        <rect x="1" y="9" width="26" height="19" fill="#e9ebef" stroke="#333942" strokeWidth="1.600" />
        <rect x="5" y="13" width="18" height="10" fill="#9aa1ae" stroke="#333942" strokeWidth="1.600" />
      </Svg>
      <Svg w={30} h={32} className="ml-[23px] h-8 w-[30px]">
        <path d="M12 31C8 28 6 24 1 18C0 15.500 3 15 5 17L8.500 20L5.500 7C5 4 8.500 3.500 9 6L12 15L12.500 3C12.500 0.500 16 0.500 16 3L16.500 14L19 4C19.500 1.500 23 2 22.500 5L21 16L26 9C27.500 7 30 8.500 29 11L23 24L21 31Z" fill="#f4f5f7" stroke="#444a54" strokeWidth="1.500" />
      </Svg>
      <Svg w={30} h={32} className="ml-[22px] h-8 w-[30px]">
        <path d="M20 21L28 29" stroke="#2c333b" strokeWidth="4" strokeLinecap="round" />
        <circle cx="11" cy="12" r="10.500" fill="#e3f3f3" stroke="#444d57" strokeWidth="1.500" />
        <path d="M5 9C6 6 8 5 11 5" stroke="#fff" strokeWidth="2.500" />
        <path d="M23 4.500H30M26.500 1V8M23 11H30" stroke="#222" strokeWidth="1.500" />
      </Svg>
      <Svg w={30} h={32} className="ml-[22px] h-8 w-[30px]">
        <rect x="0.800" y="1.500" width="28.500" height="30" stroke="#777" strokeWidth="1.300" strokeDasharray="6 3" />
        <path d="M20 22L28 30" stroke="#2c2c2c" strokeWidth="4.500" />
        <circle cx="11" cy="13" r="10.500" fill="#e3f3f3" stroke="#444d57" strokeWidth="1.500" />
      </Svg>
      <Caret className={c + " ml-[11px]"} />
      <Svg w={30} h={32} className="ml-[29px] h-8 w-[30px]">
        <rect x="1" y="1" width="28" height="23" fill="#e6e9ee" stroke="#333" strokeWidth="1.600" />
        <rect x="4" y="4.500" width="22" height="16" fill="#95b8e0" stroke="#2a4a7c" strokeWidth="1.500" />
        <path d="M12 24V28L7 31H23L18 28V24" fill="#d4d7dc" stroke="#444" strokeWidth="1.300" />
      </Svg>
      <Caret className={c + " ml-[5px]"} />
      <Svg w={30} h={30} className="ml-[15px] size-[30px]">
        <defs>
          <linearGradient id="gr" x1="0" y1="0" x2="0" y2="1">
            <stop offset="0" stopColor="#fff" />
            <stop offset="1" stopColor="#9aa3b2" />
          </linearGradient>
        </defs>
        <rect x="1" y="1" width="28" height="28" fill="url(#gr)" stroke="#222" strokeWidth="1.600" />
        <path d="M5 1V29M9 1V29M13 1V29M17 1V29M21 1V29M25 1V29M1 5H29M1 9H29M1 13H29M1 17H29M1 21H29M1 25H29" stroke="#6d727c" strokeWidth="0.900" />
      </Svg>
      <Caret className={c + " ml-[5px]"} />
      <Svg w={30} h={26} className="ml-[15px] h-[26px] w-[30px]">
        <rect x="0.800" y="0.800" width="28.400" height="24.400" fill="#95b8e0" stroke="#1f3f73" strokeWidth="1.500" />
        <path d="M15 1V25M1 13H29" stroke="#1f3f73" strokeWidth="2" />
        <path d="M3.500 3.500H12V10H3.500ZM18 3.500H26.500V10H18ZM3.500 16H12V22.500H3.500ZM18 16H26.500V22.500H18Z" stroke="#5f87bb" strokeWidth="1.100" />
      </Svg>
      <Caret className={c + " ml-[5px]"} />
    </div>
  );
}

function Comments() {
  return (
    <div className="absolute top-[1414px] left-2 w-[599px]">
      <PanelHeader className="border-t-0 pl-[49px]">
        <span>COMMENTS</span>
        <div className="ml-auto flex"><RoundSign plus /></div>
        <GripRight />
      </PanelHeader>
    </div>
  );
}

/* ---------- timeline ---------- */

function TlSketch({ active }) {
  const s = active ? "#4a7f9f" : "#777";
  const d = active ? "#2a7ab0" : "#1a8fe8";
  return (
    <Svg w={32} h={32} className="size-8">
      <path d="M4 2H26M2 4V26M28 4V18M4 28H16M9 10H20M8.500 10V20M22 11C21 17 17 21 11 22" stroke={s} strokeWidth="1.600" />
      {[[0, 0], [26, 0], [0, 26], [6.5, 7], [19.5, 7], [6.5, 20]].map(([x, y]) => (
        <rect key={x + "-" + y} x={x} y={y} width="4" height="4" fill={d} />
      ))}
      <path d="M15 31L17 25L21 29Z" fill="#555" />
      <path d="M17 25L25 17.500L29 21.500L21 29Z" fill="#ffc04a" stroke="#c58a1f" strokeWidth="1" />
      <path d="M25 17.500C28 14 33 18 30 21.500L29 21.500Z" fill="#f2342f" stroke="#f2342f" />
    </Svg>
  );
}

function TlExtrude() {
  return (
    <Svg w={32} h={32} className="size-8">
      <path d="M1 7L6 0H25L19 7Z" fill="#87c9fb" />
      <path d="M1 6H19V26H1Z" fill="#69afe5" />
      <path d="M19 6L25 0V20L19 26Z" fill="#4691cb" />
      <path d="M1 27.500H19V32H1Z" fill="#aaa" />
      <path d="M19 27.500L25 22V26L19 32Z" fill="#888" />
      <path d="M28.500 26V4" stroke="#222" strokeWidth="1.400" />
      <path d="M26 5.500L28.500 0L31 5.500Z" fill="#222" />
    </Svg>
  );
}

function TlPlaneTangent() {
  return (
    <Svg w={32} h={32} className="size-8">
      <path d="M1 20L18 3C22 -1 28 2 27 8L14 26Z" fill="#5cc87f" stroke="#2aa559" strokeWidth="1.200" />
      <circle cx="8" cy="24" r="7" fill="#fff" stroke="#2aa559" strokeWidth="2" />
      <path d="M16 14L31 1V18L16 30Z" fill="#e59a68" fillOpacity="0.800" stroke="#cc834f" strokeWidth="1.200" />
      <path d="M17 16C20 10 26 8 27 10C28 16 20 24 17 24Z" fill="#8cb06c" />
      <rect x="13" y="21" width="4" height="4" fill="#fff" stroke="#2aa559" />
    </Svg>
  );
}

function TlPlaneAngle() {
  return (
    <Svg w={32} h={32} className="size-8">
      <path d="M2 17L6 12H18V30H2Z" fill="#dadada" stroke="#555" strokeWidth="1.600" />
      <path d="M14 20L21 10V24L15 30Z" fill="#5cc87f" />
      <path d="M14 1L30 17L21 27L5 12Z" fill="#e59a68" stroke="#cc834f" strokeWidth="1" />
      <path d="M8 12H20L13 18Z" fill="#f3cdb2" />
      <path d="M13 20L21 10" stroke="#2aa559" strokeWidth="2" />
    </Svg>
  );
}

function Timeline() {
  const fill = "#4c4c4c";
  return (
    <div className="flex h-[100px] border-t-2 border-[#cbcbcb] bg-[#f1f1f1] pr-[26px] pl-[22px]">
      <div className="mt-8 flex h-8 items-center self-start">
        <Svg w={24} h={28} className="h-7 w-6"><path d="M0 0H4V28H0ZM24 0V28L5 14Z" fill={fill} /></Svg>
        <Svg w={26} h={28} className="ml-6 h-7 w-[26px]"><path d="M20 2V26L0 14ZM22 8H26V20H22Z" fill={fill} /></Svg>
        <Svg w={24} h={32} className="ml-[26px] h-8 w-6"><path d="M0 0V32L24 16Z" fill={fill} /></Svg>
        <Svg w={26} h={28} className="ml-6 h-7 w-[26px]"><path d="M6 2V26L26 14ZM0 8H4V20H0Z" fill={fill} /></Svg>
        <Svg w={24} h={28} className="ml-[26px] h-7 w-6"><path d="M20 0H24V28H20ZM0 0V28L19 14Z" fill={fill} /></Svg>
      </div>
      <div className="relative mt-[22px] ml-[38px] w-[350px]">
        <svg className="absolute top-[46px] left-6 h-[14px] w-[290px]" viewBox="0 0 290 14">
          <path d="M0 10H290V14H0ZM0 0H4V12H0ZM46 0H50V12H46ZM94 0H98V12H94ZM142 0H146V12H142ZM190 0H194V12H190ZM238 0H242V12H238ZM286 0H290V12H286Z" fill="#cbcbcb" />
        </svg>
        <div className="relative flex h-12 items-center">
          <div className="ml-2 flex gap-4">
            <TlSketch />
            <TlExtrude />
            <TlSketch />
            <TlPlaneTangent />
            <TlSketch />
            <TlPlaneAngle />
          </div>
          <div className="ml-2 flex size-12 items-center justify-center rounded bg-[#0696d7]">
            <TlSketch active />
          </div>
          <Svg w={24} h={64} className="-mt-1 -ml-3 h-16 w-6 self-start">
            <path d="M0 0H24V6L14 17V64H10V17L0 6Z" fill="#666" />
          </Svg>
        </div>
      </div>
      <div className="mt-8 ml-auto size-8"><Gear /></div>
    </div>
  );
}

export default function App() {
  return (
    <div className="flex h-[1800px] w-[2880px] flex-col overflow-hidden bg-white font-['Noto_Sans',sans-serif]">
      <TitleBar />
      <Ribbon />
      <div className="relative h-[1472px] bg-white">
        <Scene />
        <Browser />
        <ExtrudeDialog />
        <FloatingInput />
        <Tooltip />
        <Comments />
        <NavBar />
        <div className="absolute right-[71px] bottom-[18px] text-[22px] leading-[30px] font-semibold tracking-[0.800px] whitespace-nowrap text-[#333]">
          1 Profile | Area : 78.54 mm^2
        </div>
      </div>
      <Timeline />
    </div>
  );
}
